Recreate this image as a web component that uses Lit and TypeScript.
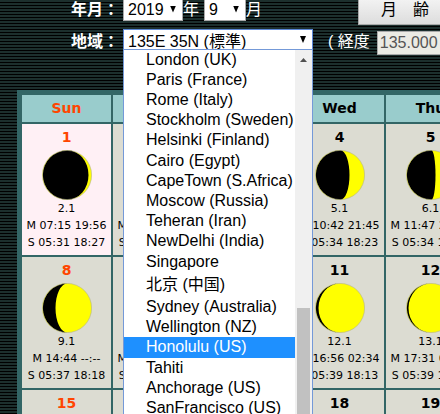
import { LitElement, html, css, svg } from "lit";
import { customElement, property } from "lit/decorators.js";

interface Day {
  day: number;
  age: string;
  moon: string;
  sun: string;
  /** Signed half-width of the terminator: positive bulges into the lit side. */
  edge: number;
}

const d = (day: number, age: string, moon: string, sun: string, edge: number): Day => ({ day, age, moon, sun, edge });

const WEEKDAYS = ["Sun", "Mon", "Tue", "Wed", "Thu"];

const WEEKS: Day[][] = [
  [
    d(1, "2.1", "07:15 19:56", "05:31 18:27", 21),
    d(2, "3.1", "08:26 20:33", "05:32 18:26", 18),
    d(3, "4.1", "09:35 21:09", "05:33 18:25", 14),
    d(4, "5.1", "10:42 21:45", "05:34 18:23", 9),
    d(5, "6.1", "11:47 22:23", "05:34 18:22", 4),
  ],
  [
    d(8, "9.1", "14:44 --:--", "05:37 18:18", -12),
    d(9, "10.1", "15:33 00:39", "05:37 18:16", -16),
    d(10, "11.1", "16:17 01:35", "05:38 18:15", -19),
    d(11, "12.1", "16:56 02:34", "05:39 18:13", -22),
    d(12, "13.1", "17:31 03:34", "05:39 18:12", -23),
  ],
  [
    d(15, "16.1", "18:59 06:31", "05:42 18:08", -25),
    d(16, "17.1", "19:26 07:28", "05:42 18:06", -25),
    d(17, "18.1", "19:54 08:25", "05:43 18:05", -24),
    d(18, "19.1", "20:24 09:22", "05:44 18:03", -23),
    d(19, "20.1", "20:57 10:20", "05:45 18:02", -21),
  ],
];

const PLACES = [
  "London (UK)",
  "Paris (France)",
  "Rome (Italy)",
  "Stockholm (Sweden)",
  "Helsinki (Finland)",
  "Cairo (Egypt)",
  "CapeTown (S.Africa)",
  "Moscow (Russia)",
  "Teheran (Iran)",
  "NewDelhi (India)",
  "Singapore",
  "北京 (中国)",
  "Sydney (Australia)",
  "Wellington (NZ)",
  "Honolulu (US)",
  "Tahiti",
  "Anchorage (US)",
  "SanFrancisco (US)",
];

@customElement("moon-disc")
export class MoonDisc extends LitElement {
  @property({ type: Number }) edge = 0;

  static styles = css`
    :host { display: block; width: 50px; height: 50px; }
    svg { display: block; width: 100%; height: 100%; }
    .rim { fill: none; stroke: #b0b0a0; stroke-width: 0.6; }
  `;

  render() {
    const sweep = this.edge > 0 ? 0 : 1;
    const dark = `M25.5 0.3 A24.7 24.7 0 0 0 25.5 49.7 A${Math.abs(this.edge)} 24.7 0 0 ${sweep} 25.5 0.3 Z`;
    return svg`<svg viewBox="0 0 50 50" aria-hidden="true">
      <circle cx="25" cy="25" r="24.7" fill="#ffff00"></circle>
      <path d=${dark} fill="#000"></path>
      <circle class="rim" cx="25" cy="25" r="24.6"></circle>
    </svg>`;
  }
}

@customElement("place-menu")
export class PlaceMenu extends LitElement {
  static styles = css`
    :host {
      display: flex;
      box-sizing: border-box;
      height: 400px;
      background: #fff;
      border: 1px solid #7499d8;
      font: 16px/20px "Liberation Sans", "Noto Sans CJK JP", sans-serif;
      color: #000;
      overflow: hidden;
    }
    .list { flex: 1; margin: 0; padding: 0; list-style: none; }
    .item { box-sizing: border-box; height: 20px; padding-left: 22px; white-space: nowrap; }
    .item:nth-child(5n) { height: 21px; }
    .item.tall { height: 25px; line-height: 25px; }
    .item.current { background: #1e90ff; color: #fff; }
    .bar { flex: none; width: 17px; background: #f0f0f0; display: flex; flex-direction: column; align-items: center; }
    .up { width: 7px; height: 4px; margin-top: 8px; background: #505050; clip-path: polygon(50% 0, 100% 100%, 0 100%); }
    .thumb { width: 13px; flex: 1; margin-top: 246px; background: #c1c1c1; }
  `;

  render() {
    return html`
      <ul class="list" role="listbox" aria-label="地域">
        ${PLACES.map((p) => {
          const current = p.startsWith("Honolulu");
          const tall = p.startsWith("北京");
          return html`<li class="item ${current ? "current" : ""} ${tall ? "tall" : ""}" role="option" aria-selected=${current}>${p}</li>`;
        })}
      </ul>
      <div class="bar"><div class="up"></div><div class="thumb"></div></div>
    `;
  }
}

@customElement("app-root")
export class AppRoot extends LitElement {
  static styles = css`
    :host {
      display: block;
      height: 100vh;
      overflow: hidden;
      background: repeating-linear-gradient(#1c2f2d 0 2px, #000 2px 3px);
      font-family: "Liberation Sans", "Noto Sans CJK JP", sans-serif;
      font-size: 16px;
      line-height: 20px;
      color: #fff;
    }
    .form { margin: -6px 0 35px; padding-left: 71px; display: flex; flex-direction: column; gap: 4px; }
    .row { display: flex; align-items: center; height: 31px; white-space: nowrap; }
    .row > * { flex: none; }
    .row.place { height: 26px; }
    .caption { width: 52px; font-weight: bold; }
    .pick { position: relative; display: block; }
    .pick::after {
      content: "";
      position: absolute;
      right: 7px;
      top: 7px;
      width: 6px;
      height: 7px;
      background: #000;
      clip-path: polygon(0 0, 100% 0, 50% 100%);
      pointer-events: none;
    }
    select {
      appearance: none;
      display: block;
      box-sizing: border-box;
      width: 100%;
      height: 22px;
      margin: 0;
      padding: 0 0 0 4px;
      border: 1px solid #a9a9a9;
      border-radius: 0;
      background: #fff;
      color: #000;
      font: inherit;
    }
    .year { width: 60px; }
    .month { width: 42px; margin-left: 5px; }
    .area { width: 190px; align-self: flex-start; }
    .area select { border-color: #5b86d6; padding-top: 2px; }
    .menu { position: absolute; top: 20px; left: 0; right: 0; z-index: 2; }
    .age {
      box-sizing: border-box;
      height: 31px;
      width: 94px;
      margin-left: 96px;
      padding: 0;
      border: 1px solid #a9a9a9;
      background: linear-gradient(#f6f6f6, #dddddd);
      color: #000;
      font: inherit;
    }
    .lon { margin-left: 15px; }
    .value {
      box-sizing: border-box;
      width: 80px;
      height: 24px;
      align-self: flex-end;
      margin-left: 7px;
      padding: 0 2px;
      border: 1px solid #a9a9a9;
      background: #ebebe4;
      color: #545454;
      font: inherit;
    }
    .calendar {
      table-layout: fixed;
      width: 463px;
      margin-left: 17px;
      border: 3px solid #336666;
      border-spacing: 2px;
      background: #336666;
      color: #000;
      font-family: "DejaVu Sans", sans-serif;
      font-size: 11px;
      line-height: 17px;
      text-align: center;
    }
    th { height: 27px; padding: 0; background: #99cccc; font-size: 14px; }
    td { padding: 4px 0; background: #dcdcd2; white-space: nowrap; }
    .number { font-size: 14px; line-height: 18px; font-weight: bold; margin-bottom: 4px; }
    .first { background: #fff0f5; }
    .holiday { color: #ff4500; }
    moon-disc { margin: 0 auto; }
  `;

  private cell(day: Day, col: number) {
    return html`<td class=${day.day === 1 ? "first" : ""}>
      <div class="number ${col === 0 ? "holiday" : ""}">${day.day}</div>
      <moon-disc .edge=${day.edge}></moon-disc>
      <div>${day.age}</div>
      <div>M ${day.moon}</div>
      <div>S ${day.sun}</div>
    </td>`;
  }

  render() {
    return html`
      <form class="form">
        <div class="row">
          <label class="caption" for="year">年月：</label>
          <span class="pick year"><select id="year"><option>2019</option></select></span>
          <label for="year">年</label>
          <span class="pick month"><select id="month"><option>9</option></select></span>
          <label for="month">月</label>
          <button class="age" type="button">月　齢</button>
        </div>
        <div class="row place">
          <label class="caption" for="area">地域：</label>
          <span class="pick area">
            <select id="area"><option>135E 35N (標準)</option></select>
            <place-menu class="menu"></place-menu>
          </span>
          <label class="lon" for="lon">( 経度</label>
          <input class="value" id="lon" value="135.000" disabled />
        </div>
      </form>
      <table class="calendar">
        <thead>
          <tr>${WEEKDAYS.map((w, i) => html`<th scope="col" class=${i === 0 ? "holiday" : ""}>${w}</th>`)}</tr>
        </thead>
        <tbody>
          ${WEEKS.map((week) => html`<tr>${week.map((day, i) => this.cell(day, i))}</tr>`)}
        </tbody>
      </table>
    `;
  }
}
